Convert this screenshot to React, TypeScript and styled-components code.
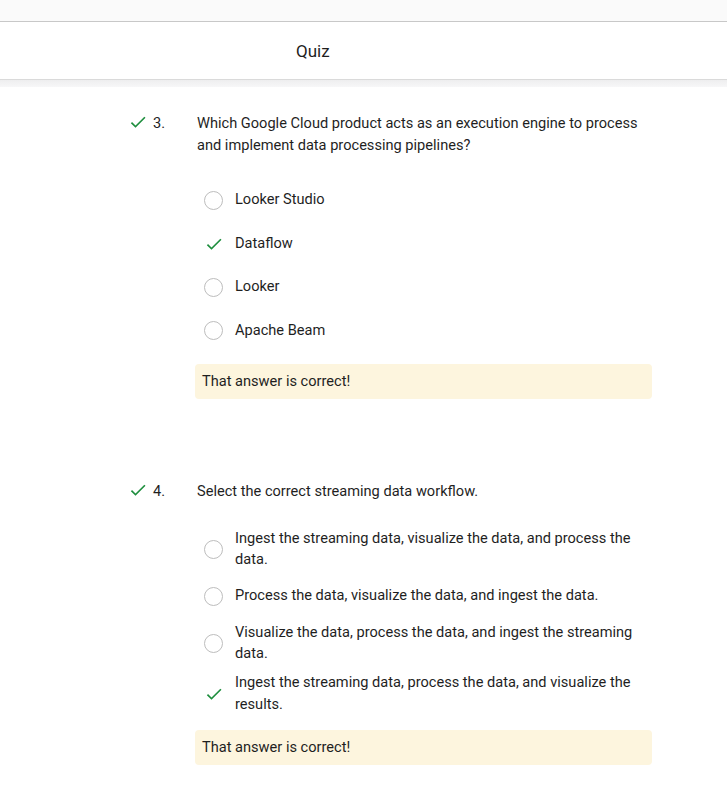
import React from "react";
import styled, { createGlobalStyle } from "styled-components";

const Global = createGlobalStyle`
  html, body { margin: 0; padding: 0; background: #ffffff; }
  body { font-family: Roboto, "Liberation Sans", Arial, sans-serif; color: #1f1f1f; }
`;

const Page = styled.div`
  display: flex;
  flex-direction: column;
  min-height: 808px;
`;

const TopStrip = styled.div`
  height: 21px;
  background: #fafafa;
  border-bottom: 1px solid #c8c8c8;
`;

const Header = styled.header`
  height: 57px;
  display: flex;
  align-items: center;
  padding-left: 296px;
  font-size: 17px;
  border-bottom: 1px solid #dadada;
`;

const Shadow = styled.div`
  height: 7px;
  background: linear-gradient(#eeeeef, #f7f7f8);
`;

const Content = styled.main`
  display: flex;
  flex-direction: column;
  gap: 81px;
  padding: 25px 0 40px 128px;
  width: 524px;
`;

const Question = styled.section`
  display: grid;
  grid-template-columns: 69px 1fr;
`;

const Marker = styled.div`
  display: flex;
  align-items: flex-start;
  gap: 5px;
  font-size: 14.6px;
  line-height: 22px;
`;

const Body = styled.div`
  display: flex;
  flex-direction: column;
`;

const Prompt = styled.p`
  margin: 0 0 26px;
  font-size: 14.6px;
  line-height: 22px;
`;

const Options = styled.ul`
  list-style: none;
  margin: 0 0 15px;
  padding: 0;
  display: flex;
  flex-direction: column;
  gap: 7.5px;
`;

const Option = styled.li`
  display: flex;
  align-items: center;
  min-height: 36px;
`;

const IconSlot = styled.div`
  width: 38px;
  flex: none;
  display: flex;
  justify-content: flex-start;
  padding-left: 7px;
  box-sizing: border-box;
`;

const Radio = styled.span`
  width: 17px;
  height: 17px;
  border-radius: 50%;
  border: 1px solid #bdbdbd;
  display: block;
`;

const OptionText = styled.span`
  font-size: 14.6px;
  line-height: 21.5px;
`;

const Feedback = styled.div`
  margin-left: -2px;
  background: #fdf5de;
  border-radius: 4px;
  padding: 7px 7px;
  font-size: 14.6px;
  line-height: 21px;
`;

const Check = ({ size = 20 }: { size?: number }) => (
  <svg width={size} height={size} viewBox="0 0 24 24" style={{ display: "block", flex: "none" }}>
    <path fill="#1e8e3e" d="M9 16.17L4.83 12l-1.42 1.41L9 19 21 7l-1.41-1.41z" />
  </svg>
);

type Q = { n: number; prompt: string; options: string[]; correct: number };

const questions: Q[] = [
  {
    n: 3,
    prompt: "Which Google Cloud product acts as an execution engine to process and implement data processing pipelines?",
    options: ["Looker Studio", "Dataflow", "Looker", "Apache Beam"],
    correct: 1,
  },
  {
    n: 4,
    prompt: "Select the correct streaming data workflow.",
    options: [
      "Ingest the streaming data, visualize the data, and process the data.",
      "Process the data, visualize the data, and ingest the data.",
      "Visualize the data, process the data, and ingest the streaming data.",
      "Ingest the streaming data, process the data, and visualize the results.",
    ],
    correct: 3,
  },
];

export default function App() {
  return (
    <Page>
      <Global />
      <TopStrip />
      <Header>Quiz</Header>
      <Shadow />
      <Content>
        {questions.map((q) => (
          <Question key={q.n}>
            <Marker>
              <Check />
              <span>{q.n}.</span>
            </Marker>
            <Body>
              <Prompt>{q.prompt}</Prompt>
              <Options>
                {q.options.map((o, i) => (
                  <Option key={o}>
                    <IconSlot>{i === q.correct ? <Check /> : <Radio />}</IconSlot>
                    <OptionText>{o}</OptionText>
                  </Option>
                ))}
              </Options>
              <Feedback>That answer is correct!</Feedback>
            </Body>
          </Question>
        ))}
      </Content>
    </Page>
  );
}
